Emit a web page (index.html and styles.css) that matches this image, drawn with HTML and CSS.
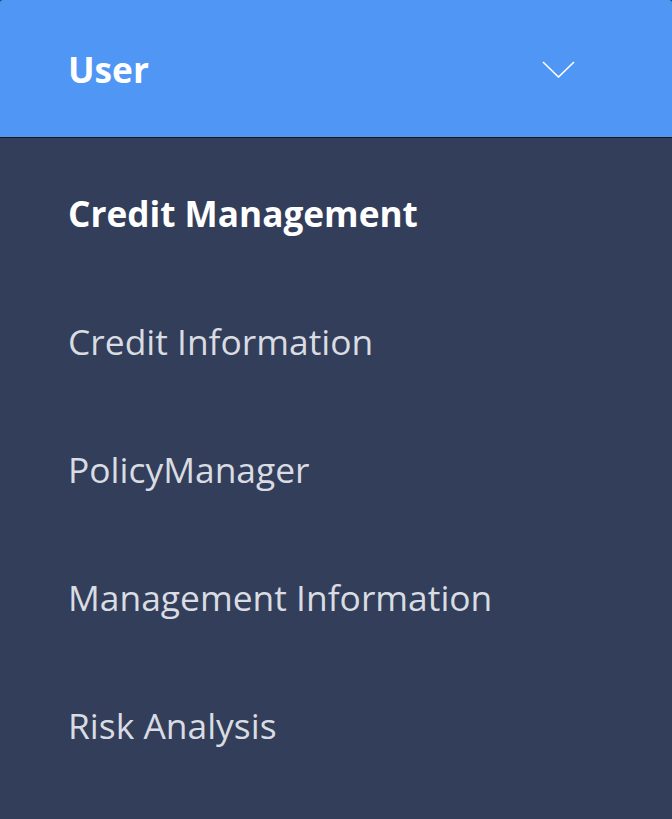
FILE: index.html
```html
<!DOCTYPE html>
<html lang="en">
<head>
<meta charset="utf-8">
<title>Menu</title>
<link rel="stylesheet" href="styles.css">
</head>
<body>
<nav class="menu">
  <div class="menu-header">
    <span class="menu-title">User</span>
    <svg class="chevron" width="33" height="17" viewBox="0 0 33 17" aria-hidden="true">
      <path d="M1 1 L16.5 16 L32 1" fill="none" stroke="#ffffff" stroke-width="1.6"/>
    </svg>
  </div>
  <ul class="menu-list">
    <li class="menu-item active">Credit Management</li>
    <li class="menu-item">Credit Information</li>
    <li class="menu-item">PolicyManager</li>
    <li class="menu-item">Management Information</li>
    <li class="menu-item">Risk Analysis</li>
  </ul>
</nav>
</body>
</html>
```
FILE: styles.css
```css
html, body {
  margin: 0;
  padding: 0;
  height: 100%;
  background: #323e5a;
}
body {
  font-family: "Open Sans", "Liberation Sans", sans-serif;
}
.menu {
  width: 672px;
  min-height: 819px;
  background: #323e5a;
}
.menu-header {
  height: 138px;
  box-sizing: border-box;
  display: flex;
  align-items: center;
  justify-content: space-between;
  padding: 0 97px 0 68px;
  background: #5096f5;
  border-bottom: 1px solid #15171c;
  border-radius: 3px 3px 0 0;
}
.menu-title {
  color: #ffffff;
  font-size: 35.2px;
  font-weight: 700;
  line-height: 49px;
  margin-top: 1px;
}
.chevron {
  display: block;
  margin-top: 2px;
}
.menu-list {
  list-style: none;
  margin: 0;
  padding: 11px 0 0 0;
}
.menu-item {
  height: 128px;
  display: flex;
  align-items: center;
  padding-left: 68px;
  color: #d9dce2;
  font-size: 35.4px;
  font-weight: 400;
  line-height: 49px;
}
.menu-item.active {
  color: #ffffff;
  font-size: 35.2px;
  font-weight: 700;
}
```
